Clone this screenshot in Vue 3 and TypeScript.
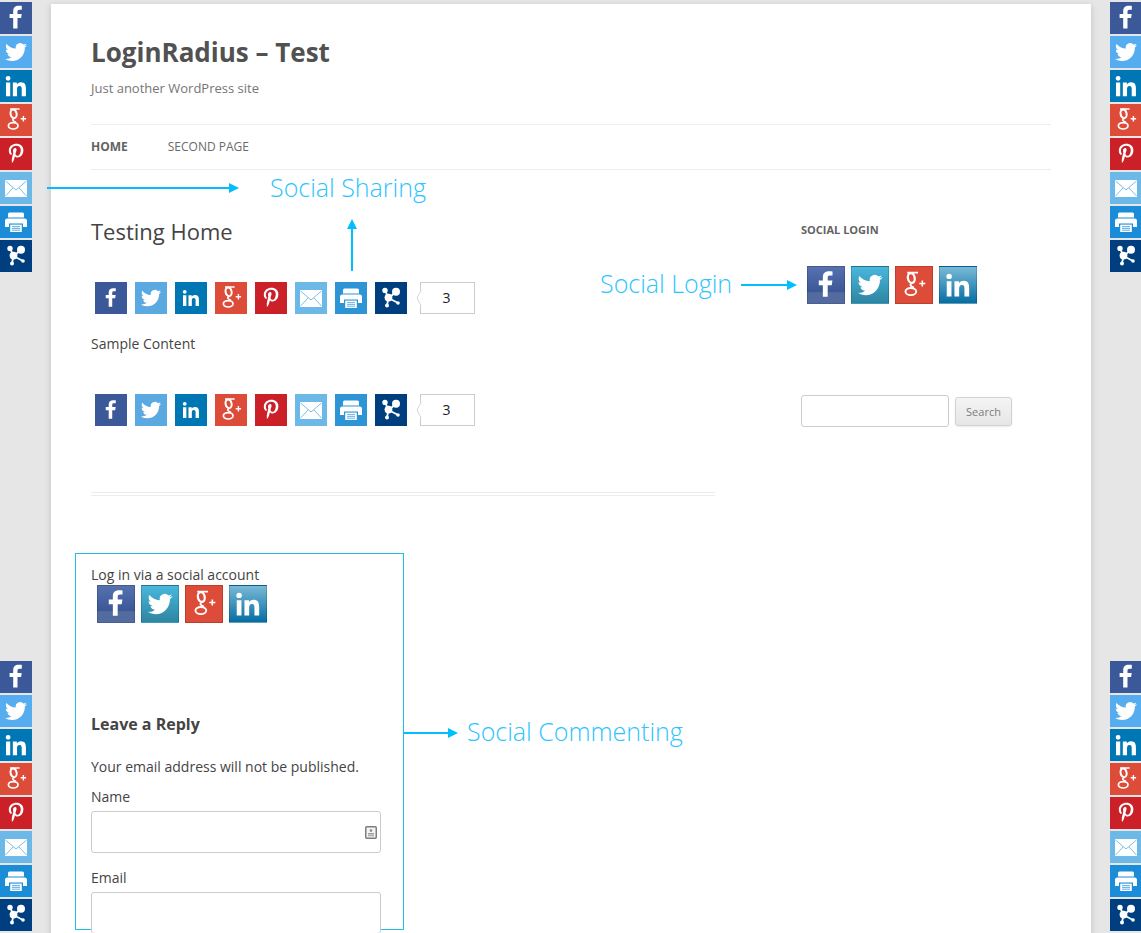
<script setup lang="ts">
const iconTypes = ['fb', 'tw', 'li', 'gp', 'pi', 'em', 'pr', 'sh'] as const
const loginTypes = ['fb', 'tw', 'gp', 'li'] as const
const twitter = 'M23.953 4.57a10 10 0 01-2.825.775 4.958 4.958 0 002.163-2.723c-.951.555-2.005.959-3.127 1.184a4.92 4.92 0 00-8.384 4.482C7.69 8.095 4.067 6.13 1.64 3.162a4.822 4.822 0 00-.666 2.475c0 1.71.87 3.213 2.188 4.096a4.904 4.904 0 01-2.228-.616v.06a4.923 4.923 0 003.946 4.827 4.996 4.996 0 01-2.212.085 4.936 4.936 0 004.604 3.417 9.867 9.867 0 01-6.102 2.105c-.39 0-.779-.023-1.17-.067a13.995 13.995 0 007.557 2.209c9.053 0 13.998-7.496 13.998-13.985 0-.21 0-.42-.015-.63A9.935 9.935 0 0024 4.59z'
const linkedin = 'M20.447 20.452h-3.554v-5.569c0-1.328-.027-3.037-1.852-3.037-1.853 0-2.136 1.445-2.136 2.939v5.667H9.351V9h3.414v1.561h.046c.477-.9 1.637-1.85 3.37-1.85 3.601 0 4.267 2.37 4.267 5.455v6.286zM5.337 7.433a2.062 2.062 0 01-2.063-2.065 2.064 2.064 0 112.063 2.065zm1.782 13.019H3.555V9h3.564v11.452z'
const pinterest = 'M204 6.5C101.4 6.5 0 74.9 0 185.6 0 256 39.6 296 63.6 296c9.9 0 15.6-27.6 15.6-35.4 0-9.3-23.7-29.1-23.7-67.8 0-80.4 61.2-137.4 140.4-137.4 68.1 0 118.5 38.7 118.5 109.8 0 53.1-21.3 152.7-90.3 152.7-24.9 0-46.2-18-46.2-43.8 0-37.8 26.4-74.4 26.4-113.4 0-66.2-93.9-54.2-93.9 25.8 0 16.8 2.1 35.4 9.6 50.7-13.8 59.4-42 147.9-42 209.1 0 18.9 2.7 37.5 4.5 56.4 3.4 3.8 1.7 3.4 6.9 1.5 50.4-69 48.6-82.5 71.4-172.8 12.3 23.4 44.1 36 69.3 36 106.2 0 153.9-103.5 153.9-196.8C384 71.3 298.2 6.5 204 6.5z'
const facebook = 'M18 28V17.2h3.6l.6-4.2H18v-2.6c0-1.2.4-2 2.1-2h2.2V4.6c-.4-.1-1.7-.2-3.2-.2-3.2 0-5.4 1.9-5.4 5.5V13h-3.6v4.2h3.6V28z'
const bars = [{ name: 'top', cls: 'bar-top' }, { name: 'bottom', cls: 'bar-bottom' }]
</script>

<template>
  <div class="page">
    <svg width="0" height="0" class="defs">
      <defs>
        <g id="g-fb"><path :d="facebook" fill="#fff" transform="translate(-.5 -.4) scale(1 .96)" /></g>
        <g id="g-tw"><path :d="twitter" fill="#fff" transform="translate(5 5) scale(.92)" /></g>
        <g id="g-li"><path :d="linkedin" fill="#fff" transform="translate(1.8 2) scale(1.18)" /></g>
        <g id="g-gp" fill="none" stroke="#fff">
          <ellipse cx="13.6" cy="9.8" rx="3" ry="4.4" stroke-width="2" transform="rotate(-12 13.6 9.8)" />
          <ellipse cx="13.2" cy="21.8" rx="4.8" ry="3.2" stroke-width="1.7" />
          <path d="M14 14.6c-2.2 1.2-1.4 2.4 2 3.6M10 5h9.6" stroke-width="1.5" />
          <path d="M23.4 12v5.4M20.7 14.7h5.4" stroke-width="1.4" />
        </g>
        <g id="g-pi"><path :d="pinterest" fill="#fff" transform="translate(8.8 5.6) scale(.038)" /></g>
        <g id="g-em">
          <rect x="5" y="8" width="22" height="17" fill="#fff" />
          <path d="M5.5 9l10.5 9 10.5-9M5.5 24l7.5-8M26.5 24l-7.5-8" fill="none" stroke="currentColor" stroke-width=".9" />
        </g>
        <g id="g-pr" fill="#fff">
          <path d="M9.5 6.5h13A1.5 1.5 0 0124 8v3.4H8V8a1.5 1.5 0 011.5-1.5z" />
          <path d="M7.5 12.4h17A2.5 2.5 0 0127 15v6h-4v-3.6H9V21H5v-6a2.5 2.5 0 012.5-2.6z" />
          <path d="M10.2 18.6h11.6V26H10.2z" />
          <path d="M12 20.6h8M12 22.4h8M12 24.2h8" stroke="currentColor" stroke-width=".7" />
        </g>
        <g id="g-sh" fill="#fff">
          <path d="M10 8.4l3.5 7.6L21 10M13.5 16L12 23.4M13.5 16L23 21" stroke="#fff" stroke-width="1.8" fill="none" />
          <circle cx="10" cy="8.4" r="2.7" /><circle cx="21" cy="9.8" r="4" /><circle cx="13.5" cy="15.6" r="3.9" />
          <circle cx="12" cy="23.4" r="2" /><circle cx="23" cy="21" r="1.8" />
        </g>
      </defs>
    </svg>

    <div class="card">
      <header class="head">
        <h1 class="title">LoginRadius – Test</h1>
        <p class="tagline">Just another WordPress site</p>
      </header>
      <nav class="nav">
        <a class="nav-item active">Home</a>
        <a class="nav-item">Second Page</a>
      </nav>

      <div class="columns">
        <main class="primary">
          <h2 class="entry-title">Testing Home</h2>
          <div class="share-row">
            <svg v-for="t in iconTypes" :key="t" :class="['sq', 'inline', t]" viewBox="0 0 32 32"><use :href="`#g-${t}`" /></svg>
            <div class="counter">3</div>
          </div>
          <p class="sample">Sample Content</p>
          <div class="share-row second">
            <svg v-for="t in iconTypes" :key="t" :class="['sq', 'inline', t]" viewBox="0 0 32 32"><use :href="`#g-${t}`" /></svg>
            <div class="counter">3</div>
          </div>
          <div class="double"></div>
        </main>
        <aside class="side">
          <h3 class="widget-title">Social Login</h3>
          <div class="login-row">
            <svg v-for="t in loginTypes" :key="t" :class="['lg', t]" viewBox="0 0 32 32"><use :href="`#g-${t}`" /></svg>
          </div>
          <form class="search" @submit.prevent>
            <input class="search-input" type="text" aria-label="Search" />
            <button class="search-btn" type="submit">Search</button>
          </form>
        </aside>
      </div>

      <section class="comments">
        <p class="via">Log in via a social account</p>
        <div class="login-row small">
          <svg v-for="t in loginTypes" :key="t" :class="['lg', t]" viewBox="0 0 32 32"><use :href="`#g-${t}`" /></svg>
        </div>
        <h3 class="reply">Leave a Reply</h3>
        <p class="note">Your email address will not be published.</p>
        <label class="field-label">Name</label>
        <div class="field">
          <svg class="contact" viewBox="0 0 12 13">
            <rect x=".75" y=".75" width="10.5" height="11.5" rx="1" fill="#f4f4f4" stroke="#7d7d7d" stroke-width="1.5" />
            <circle cx="6" cy="4.6" r="1.3" fill="#8a8a8a" />
            <path d="M3 7h6v1.4H3zM3 9.2h6v1H3z" fill="#9a9a9a" />
          </svg>
        </div>
        <label class="field-label email">Email</label>
        <div class="field"></div>
      </section>
    </div>

    <div v-for="b in bars" :key="b.name" :class="['float', 'left', b.cls]">
      <svg v-for="t in iconTypes" :key="t" :class="['sq', 'f', t]" viewBox="0 0 32 32"><use :href="`#g-${t}`" /></svg>
    </div>
    <div v-for="b in bars" :key="b.name + 'r'" :class="['float', 'right', b.cls]">
      <svg v-for="t in iconTypes" :key="t" :class="['sq', 'f', t]" viewBox="0 0 32 32"><use :href="`#g-${t}`" /></svg>
    </div>

    <div class="note-label l1">Social Sharing</div>
    <div class="note-label l2">Social Login</div>
    <div class="note-label l3">Social Commenting</div>
    <svg class="arrows" width="1141" height="933" viewBox="0 0 1141 933">
      <g fill="#00bfff" stroke="none">
        <path d="M47 187h184v2H47zM229 183l10 5-10 5z" />
        <path d="M351 229h2v42h-2zM352 219l5 10h-10z" />
        <path d="M741 284h48v2h-48zM787 280l10 5-10 5z" />
        <path d="M404 732h46v2h-46zM448 728l10 5-10 5z" />
      </g>
    </svg>
  </div>
</template>

<style>
html, body { margin: 0; padding: 0; height: 933px; overflow: hidden; background: #e6e6e6; }
</style>

<style scoped>
.page {
  position: relative;
  height: 933px;
  overflow: hidden;
  background: #e6e6e6;
  font-family: "Open Sans", sans-serif;
  font-size: 14px;
  color: #444;
}
.defs { position: absolute; }
.card {
  margin: 4px 50px 0 51px;
  padding: 0 40px;
  height: 1100px;
  background: #fff;
  box-shadow: 0 2px 6px rgba(100, 100, 100, .3);
}
.head { padding-top: 29px; }
.title { margin: 0; font-size: 26px; line-height: 39px; font-weight: 700; color: #515151; }
.tagline { margin: 7px 0 0; font-size: 13px; line-height: 19px; color: #757575; }
.nav {
  display: flex;
  gap: 40px;
  box-sizing: content-box;
  margin-top: 26px;
  height: 42px;
  padding-bottom: 2px;
  align-items: center;
  border-top: 1px solid #ededed;
  border-bottom: 1px solid #ededed;
}
.nav-item { font-size: 12px; text-transform: uppercase; color: #6a6a6a; }
.nav-item.active { font-weight: 700; color: #636363; }
.columns { display: flex; justify-content: space-between; height: 385px; }
.primary { width: 624px; }
.entry-title { margin: 45px 0 0; font-size: 22px; line-height: 33px; font-weight: 400; color: #444; }
.share-row { display: flex; align-items: center; gap: 8px; margin: 34px 0 0 4px; height: 32px; }
.share-row.second { margin-top: 40px; }
.sq { display: block; width: 32px; height: 32px; flex: none; }
.inline.fb use { transform: scale(.82); transform-origin: 16px 17px; }
.inline.tw use { transform: scale(.92); transform-origin: 16px 17px; }
.inline.li use { transform: scale(.8); transform-origin: 16px 16px; }
.fb { background: #3b5998; color: #3b5998; }
.tw { background: #5aa9e0; color: #5aa9e0; }
.li { background: #0077b5; color: #0077b5; }
.gp { background: #dd4b39; color: #dd4b39; }
.pi { background: #cb2027; color: #cb2027; }
.em { background: #6cb8e6; color: #6cb8e6; }
.pr { background: #2d95d5; color: #2d95d5; }
.sh { background: #003f7f; color: #003f7f; }
.f.tw { background: #55acee; color: #55acee; }
.f.pr { background: #1a8cd8; color: #1a8cd8; }
.counter {
  position: relative;
  box-sizing: border-box;
  width: 55px;
  height: 32px;
  margin-left: 5px;
  padding-right: 2px;
  border: 1px solid #ccc;
  background: #fff;
  text-align: center;
  font-size: 14px;
  line-height: 30px;
  color: #222;
}
.counter::before {
  content: "";
  position: absolute;
  left: -6px;
  top: 9px;
  width: 11px;
  height: 11px;
  background: #fff;
  border-left: 1px solid #ccc;
  border-bottom: 1px solid #ccc;
  transform: scaleX(.5) rotate(45deg);
}
.sample { margin: 19px 0 0; font-size: 14px; line-height: 21px; color: #444; }
.double {
  margin-top: 66px;
  height: 2px;
  border-top: 1px solid #ededed;
  border-bottom: 1px solid #ededed;
}
.side { width: 250px; }
.widget-title {
  margin: 52px 0 0;
  font-size: 11px;
  line-height: 16px;
  font-weight: 700;
  text-transform: uppercase;
  color: #636363;
}
.login-row { display: flex; gap: 6px; margin: 28px 0 0 6px; }
.lg {
  display: block;
  width: 38px;
  height: 38px;
  box-sizing: border-box;
  border: 1px solid rgba(0, 0, 0, .15);
}
.lg.fb { background: linear-gradient(#5671ae, #3b5796 70%, #536b9f 71%); }
.lg.tw { background: linear-gradient(#48b8dc, #2e85a2); }
.lg.gp { background: #dd4b39; }
.lg.li { background: linear-gradient(#79b9d6, #056ea3); }
.search { display: flex; align-items: center; gap: 6px; margin-top: 91px; }
.search-input {
  box-sizing: border-box;
  width: 148px;
  height: 32px;
  margin: 0;
  border: 1px solid #ccc;
  border-radius: 3px;
  background: #fff;
}
.search-btn {
  box-sizing: border-box;
  width: 57px;
  height: 29px;
  padding: 0;
  border: 1px solid #d2d2d2;
  border-radius: 3px;
  background: linear-gradient(#f4f4f4, #e6e6e6);
  font-family: inherit;
  font-size: 11px;
  color: #7c7c7c;
  box-shadow: 0 1px 2px rgba(64, 64, 64, .1);
}
.comments {
  box-sizing: border-box;
  width: 329px;
  height: 377px;
  margin: -2px 0 0 -16px;
  padding: 11px 22px 0 15px;
  border: 1px solid #1fbde8;
  position: relative;
}
.via { margin: 0; font-size: 14px; line-height: 20px; color: #444; }
.login-row.small { margin: 0 0 0 6px; }
.reply { margin: 89px 0 0; font-size: 16px; line-height: 24px; font-weight: 700; color: #444; }
.note { margin: 20px 0 0; font-size: 14px; line-height: 21px; color: #444; }
.field-label { display: block; margin-top: 9px; font-size: 14px; line-height: 21px; color: #444; }
.field-label.email { margin-top: 14px; }
.field {
  position: relative;
  box-sizing: border-box;
  height: 42px;
  margin-top: 4px;
  border: 1px solid #ccc;
  border-radius: 3px;
  background: #fff;
}
.contact { position: absolute; right: 3px; top: 14px; width: 12px; height: 13px; }
.float { position: absolute; display: flex; flex-direction: column; gap: 2px; }
.float.left { left: 0; }
.float.right { left: 1110px; }
.bar-top { top: 2px; }
.bar-bottom { top: 661px; }
.note-label {
  position: absolute;
  font-size: 25px;
  line-height: 32px;
  font-weight: 300;
  color: #2cc4ff;
  white-space: nowrap;
}
.l1 { left: 270px; top: 171px; }
.l2 { left: 600px; top: 267px; }
.l3 { left: 467px; top: 715px; }
.arrows { position: absolute; left: 0; top: 0; pointer-events: none; }
</style>
